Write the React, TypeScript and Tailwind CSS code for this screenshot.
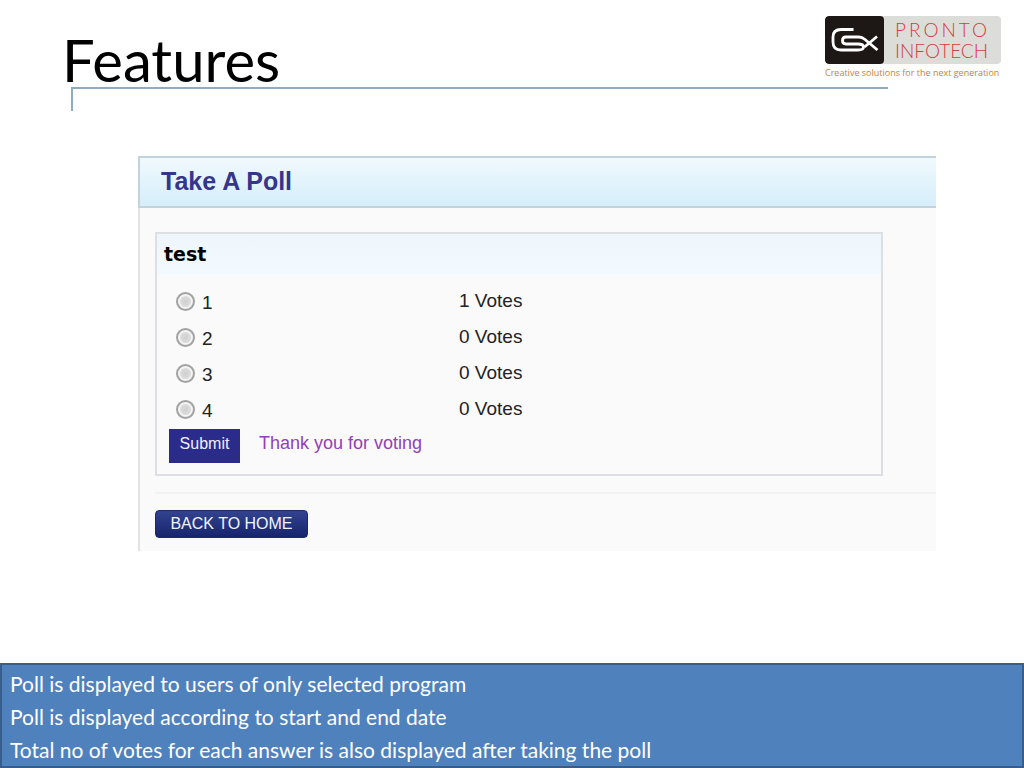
const options = [
  { id: '1', votes: 1 },
  { id: '2', votes: 0 },
  { id: '3', votes: 0 },
  { id: '4', votes: 0 },
];

const notes = [
  'Poll is displayed to users of only selected program',
  'Poll is displayed according to start and end date',
  'Total no of votes for each answer is also displayed after taking the poll',
];

function Logo() {
  return (
    <div className="mt-4 w-44 shrink-0">
      <div className="flex h-12 overflow-hidden rounded-[4px] bg-[#dcddd8]">
        <div className="flex w-[59px] items-center justify-center rounded-[4px] bg-[#1d1715]">
          <svg viewBox="0 0 59 48" className="h-12 w-[59px]" fill="none" stroke="#fff" strokeWidth="2.8" aria-hidden="true">
            <path d="M28.5 13.5H16Q8 13.5 8 21V26Q8 34 16 34H33Q38.5 34 38.5 31T33 28H21Q17.5 28 17.5 24.5T21 21H34Q37 21 40 23.5L52.5 34" />
            <path d="M52 20.5L39.5 31" />
          </svg>
        </div>
        <div className="flex flex-1 flex-col justify-center pl-[11px] font-['Lato',sans-serif] text-[19px] leading-[21px] font-light text-[#d23c43]">
          <span className="tracking-[3px]">PRONTO</span>
          <span>INFOTECH</span>
        </div>
      </div>
      <p className="mt-1 whitespace-nowrap font-['Open_Sans',sans-serif] text-[9px] leading-[10px] font-medium text-[#cc7f33]">
        Creative solutions for the next generation
      </p>
    </div>
  );
}

export default function App() {
  return (
    <div className="flex min-h-screen flex-col bg-white font-['Liberation_Sans',sans-serif] text-[#222]">
      <header>
        <div className="flex h-[87px] items-start justify-between pr-[23px] pl-[62px]">
          <h1 className="pt-7 font-['Lato',sans-serif] text-[58px] leading-[64px] text-black">Features</h1>
          <Logo />
        </div>
        <div className="mr-[136px] ml-[71px] h-6 border-t-2 border-l-2 border-[#8fabc0]" />
      </header>

      <main className="mt-[45px] mr-[88px] mb-10 ml-[138px] border-l-2 border-[#e0e2e4] bg-[#fafafa]">
        <h2 className="-ml-0.5 border-2 border-r-0 border-[#c3d3db] bg-linear-to-b from-[#f0f9fd] to-[#d5eefa] pb-0.5 pl-[21px] text-[25px] leading-[46px] font-bold text-[#35358c]">
          Take A Poll
        </h2>
        <div className="pl-[15px]">
          <form className="mt-6 mr-[53px] border-2 border-[#dcdfe3]" onSubmit={(e) => e.preventDefault()}>
            <h3 className="bg-linear-to-b from-[#eef6fb] to-[#f3faff] pl-[7px] font-['DejaVu_Sans',sans-serif] text-[19px] leading-10 font-bold text-black">
              test
            </h3>
            <table className="mt-[9px] w-full table-fixed text-left">
              <tbody>
                {options.map((o) => (
                  <tr key={o.id} className="h-9">
                    <td className="w-[302px] p-0 pl-[19px]">
                      <div className="flex items-center gap-[7px]">
                        <input
                          type="radio"
                          name="poll"
                          id={`option-${o.id}`}
                          className="size-[19px] appearance-none rounded-full border-2 border-[#a3a3a3] bg-radial from-[#d0d0d0] to-[#e8e8e8] shadow-[inset_0_0_0_2px_#f4f4f4] checked:from-[#333]"
                        />
                        <label htmlFor={`option-${o.id}`} className="pt-1 text-[19px] leading-6">
                          {o.id}
                        </label>
                      </div>
                    </td>
                    <td className="p-0 text-[19px] leading-6">{o.votes} Votes</td>
                  </tr>
                ))}
              </tbody>
            </table>
            <div className="mt-0.5 mb-[11px] flex items-start pl-3">
              <button type="submit" className="h-[34px] w-[71px] bg-[#2b2b8c] pb-1 text-base leading-6 text-[#f0f0ff]">
                Submit
              </button>
              <p className="ml-[19px] text-[18px] leading-7 text-[#9340b5]">Thank you for voting</p>
            </div>
          </form>
          <hr className="mt-4 border-t-2 border-[#f2f2f3]" />
          <button
            type="button"
            className="mt-4 mb-[13px] block h-7 w-[153px] rounded-[4px] border border-[#1f2a63] bg-linear-to-b from-[#33438f] to-[#17246d] text-base leading-6 text-[#f2f4ff]"
          >
            BACK TO HOME
          </button>
        </div>
      </main>

      <footer className="mt-auto border-2 border-[#385d8a] bg-[#4f81bd] pt-0.5 pl-2 font-['Lato',sans-serif] text-[21px] leading-[33px] text-white">
        {notes.map((n) => (
          <p key={n}>{n}</p>
        ))}
      </footer>
    </div>
  );
}
